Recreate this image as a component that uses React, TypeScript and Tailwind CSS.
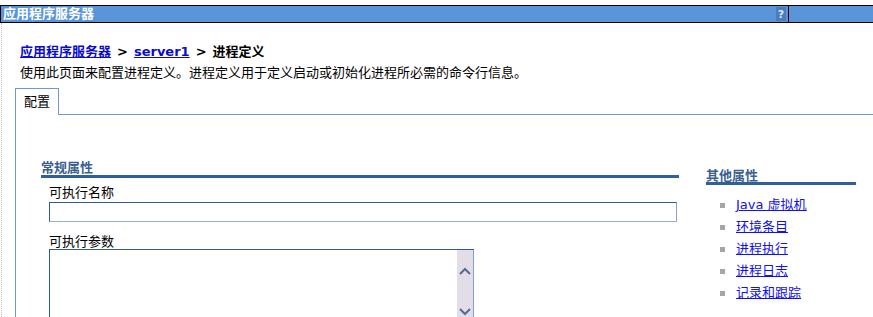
import React from "react";

const links = ["Java 虚拟机", "环境条目", "进程执行", "进程日志", "记录和跟踪"];

export default function App() {
  return (
    <div
      className="w-[873px] h-[317px] overflow-hidden bg-white text-[13px] leading-[16px] text-black"
      style={{ fontFamily: '"DejaVu Sans", "Noto Sans CJK SC", sans-serif' }}
    >
      {/* Title bar */}
      <div className="mt-[5px] h-[18px] flex border-y border-l border-black bg-[#5b95d9]">
        <div className="flex-1 flex items-center pl-[2px]">
          <span className="text-white font-bold text-[13px] leading-[16px]">应用程序服务器</span>
          <div className="ml-auto mr-[2px] w-[10px] h-[14px] flex items-center justify-center bg-[#4a7cc0] text-[#dde9ff] text-[11px] font-bold leading-none">
            ?
          </div>
        </div>
        <div className="w-[85px] border-l border-black" />
      </div>

      <div className="h-[294px] ml-[1px] border-l border-dotted border-[#c8bcc8] pl-[18px]">
        {/* Breadcrumb */}
        <div className="pt-[21px] h-[42px] font-bold text-[13px] leading-[16px]">
          <a className="text-[#0b0bcc] underline">应用程序服务器</a>
          <span className="mx-[6px]">&gt;</span>
          <a className="text-[#0b0bcc] underline">server1</a>
          <span className="mx-[6px]">&gt;</span>
          <span>进程定义</span>
        </div>
        <div className="h-[23px] text-[13px] leading-[16px]">
          使用此页面来配置进程定义。进程定义用于定义启动或初始化进程所必需的命令行信息。
        </div>

        {/* Tab */}
        <div className="-ml-[5px] flex">
          <div className="w-[44px] h-[27px] border-t border-l border-r border-[#6d9bd1] pl-[8px] pt-[5px]">
            配置
          </div>
          <div className="flex-1 h-[27px] border-b border-[#6d9bd1]" />
        </div>

        {/* Panel */}
        <div className="-ml-[5px] h-[203px] border-l border-[#6d9bd1] flex pt-[45px] pl-[25px]">
          <div className="w-[638px]">
            <div className="h-[18px] font-bold text-[#3c5f8f] border-b-[3px] border-[#2f5f9d]">常规属性</div>
            <div className="pl-[8px]">
              <div className="mt-[7px] h-[17px]">可执行名称</div>
              <div className="w-[628px] h-[20px] border border-t-[#2f5b9a] border-l-[#2f5b9a] border-r-[#8aa5cc] border-b-[#9ab0d0] border-b-dotted" />
              <div className="mt-[12px] h-[15px]">可执行参数</div>
              <div className="w-[425px] h-[70px] flex border-t border-l border-[#2f5b9a]">
                <div className="flex-1" />
                <div className="w-[17px] flex flex-col items-center justify-between bg-[#e3dde8] border-r border-[#7aa0d8] pt-[17px] pb-[3px]">
                  <svg width="12" height="8" viewBox="0 0 12 8">
                    <path d="M1 7 L6 2 L11 7" fill="none" stroke="#5a6f94" strokeWidth="2.2" />
                  </svg>
                  <svg width="12" height="8" viewBox="0 0 12 8">
                    <path d="M1 1 L6 6 L11 1" fill="none" stroke="#5a6f94" strokeWidth="2.2" />
                  </svg>
                </div>
              </div>
            </div>
          </div>

          <div className="ml-[27px] w-[150px] pt-[8px]">
            <div className="h-[17px] font-bold text-[#3c5f8f] border-b-[3px] border-[#2f5f9d]">其他属性</div>
            <ul className="mt-[9px] pl-[14px]">
              {links.map((l) => (
                <li key={l} className="h-[22px] flex items-center">
                  <span className="w-[5px] h-[5px] bg-[#a9a3ad] mr-[11px]" />
                  <a className="text-[#1010f0] underline">{l}</a>
                </li>
              ))}
            </ul>
          </div>
        </div>
      </div>
    </div>
  );
}
